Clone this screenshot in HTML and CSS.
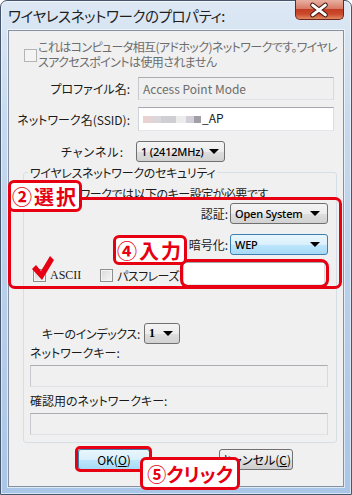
FILE: index.html
```html
<!DOCTYPE html>
<html lang="ja">
<head>
    <meta charset="UTF-8">
    <title>ワイヤレスネットワークのプロパティ</title>
    <link rel="stylesheet" href="styles.css">
</head>
<body>
    <div class="window">
        <div class="titlebar">
            <span class="title">ワイヤレスネットワークのプロパティ:</span>
            <span class="close-btn">
                <svg width="49" height="20" viewBox="0 0 49 20">
                    <path d="M18 5 L31 15 M31 5 L18 15" stroke="#3a1710" stroke-width="5" stroke-linecap="round"/>
                    <path d="M18 5 L31 15 M31 5 L18 15" stroke="#fff" stroke-width="3" stroke-linecap="round"/>
                </svg>
            </span>
        </div>

        <div class="client">
            <!-- ad hoc option (disabled) -->
            <div class="adhoc">
                <span class="check disabled"></span>
                <p class="adhoc-text">これはコンピュータ相互(アドホック)ネットワークです。ワイヤレ<br>スアクセスポイントは使用されません</p>
            </div>

            <div class="field-row">
                <span class="field-label">プロファイル名:</span>
                <div class="textbox disabled profile">Access Point Mode</div>
            </div>
            <div class="field-row ssid-row">
                <span class="field-label">ネットワーク名(SSID):</span>
                <div class="textbox ssid"><span class="mosaic"></span>_AP</div>
            </div>
            <div class="field-row channel-row">
                <span class="field-label channel-label">チャンネル:</span>
                <div class="combo channel">1 (2412MHz)<i class="arrow"></i></div>
            </div>

            <fieldset class="group">
                <legend>ワイヤレスネットワークのセキュリティ</legend>
                <p class="note">このネットワークでは以下のキー設定が必要です</p>

                <div class="combo-row">
                    <span>認証:</span>
                    <div class="combo wide">Open System<i class="arrow"></i></div>
                </div>
                <div class="combo-row enc-row">
                    <span>暗号化:</span>
                    <div class="combo wide focused">WEP<i class="arrow"></i></div>
                </div>

                <div class="opts-row">
                    <label class="opt ascii"><span class="check"></span>ASCII</label>
                    <label class="opt pass"><span class="check"></span>パスフレーズ</label>
                    <div class="textbox pass-input"></div>
                </div>

                <div class="index-row">
                    <span class="index-label">キーのインデックス:</span>
                    <div class="combo small">1<i class="arrow"></i></div>
                </div>
                <p class="key-label">ネットワークキー:</p>
                <div class="textbox disabled key-input"></div>
                <p class="key-label confirm">確認用のネットワークキー:</p>
                <div class="textbox disabled key-input"></div>
            </fieldset>

            <div class="buttons">
                <span class="btn default">OK(<u>O</u>)</span>
                <span class="btn cancel">キャンセル(<u>C</u>)</span>
            </div>
        </div>
    </div>

    <!-- red annotations drawn over the dialog -->
    <div class="mark-frame security"></div>
    <div class="mark-frame passphrase"></div>
    <div class="mark-frame ok"></div>
    <svg class="tick" width="24" height="28" viewBox="0 0 24 28">
        <path d="M2 15 L6 11 L11 17 L20 2 L24 6 L12 26 Z" fill="#e60012"/>
    </svg>
    <div class="callout step2">②選択</div>
    <div class="callout step4">④入力</div>
    <div class="callout step5">⑤クリック</div>
</body>
</html>
```

FILE: styles.css
```css
:root {
    --red: #e60012;
    --dialog: #f0f0f0;
    --text: #1b1b1b;
    --muted: #6d6d6d;
}

* {
    margin: 0;
    padding: 0;
    box-sizing: border-box;
}

body {
    position: relative;
    width: 352px;
    height: 495px;
    overflow: hidden;
    background: #ffffff;
    color: var(--text);
    font-family: "Noto Sans CJK JP", "Noto Sans", sans-serif;
    font-size: 12px;
    font-feature-settings: "palt";
    line-height: 15px;
}

/* ---- window frame ---- */
.window {
    width: 352px;
    height: 495px;
    display: flex;
    flex-direction: column;
    border: 1px solid #46576d;
    border-radius: 7px 7px 0 0;
    background: linear-gradient(#dde8f4, #c6d9ee 25%, #b8cfea 60%, #aac6e6);
    box-shadow: inset 0 0 0 1px rgba(255, 255, 255, 0.55);
    position: relative;
}

.titlebar {
    height: 29px;
    display: flex;
    align-items: center;
    padding-left: 7px;
}

.title {
    font-size: 14.5px;
    color: #1e1e1e;
    letter-spacing: -0.4px;
}

.close-btn {
    position: absolute;
    top: -1px;
    right: 7px;
    width: 49px;
    height: 20px;
    border: 1px solid #6a2619;
    border-top: none;
    border-radius: 0 0 5px 5px;
    background: linear-gradient(#eab0a2, #d77b66 45%, #c33d22 50%, #cc4a2c 75%, #e08a62);
    display: flex;
}

.close-btn svg {
    margin-left: -1px;
}

.client {
    flex: 1;
    margin: 0 7px 7px;
    background: var(--dialog);
    border: 1px solid #8591a2;
    box-shadow: 0 0 0 1px rgba(255, 255, 255, 0.6);
    padding-top: 8px;
}

/* ---- generic controls ---- */
.check {
    display: inline-block;
    width: 13px;
    height: 13px;
    border: 1px solid #8f8f8f;
    background: linear-gradient(135deg, #d9d9d9, #f7f7f7);
    box-shadow: inset 0 0 0 1px #f4f4f4;
    flex-shrink: 0;
}

.check.disabled {
    border-color: #b4b4b4;
    background: #f4f4f4;
}

.textbox {
    height: 23px;
    border: 1px solid;
    border-color: #a3a7ad #d9dde2 #e3e7ec #cfd4da;
    background: #ffffff;
    padding: 3px 4px;
    font-size: 12px;
}

.textbox.disabled {
    background: var(--dialog);
    color: var(--muted);
    border-color: #a9adb2 #d6d9dd #dfe2e6 #c6cacf;
}

.combo {
    position: relative;
    height: 21px;
    border: 1px solid #707070;
    border-radius: 3px;
    background: linear-gradient(#f4f4f4, #ececec 50%, #dedede 51%, #d2d2d2);
    padding: 2px 0 0 4px;
    font-family: "Noto Sans", sans-serif;
    font-size: 11px;
    font-weight: 500;
    line-height: 15px;
    letter-spacing: -0.2px;
    color: #000;
    white-space: nowrap;
}

.combo.focused {
    border-color: #3c7fb1;
    background: linear-gradient(#eaf6fd, #d9f0fc 50%, #bee6fd 51%, #a7d9f5);
}

.arrow {
    position: absolute;
    right: 7px;
    top: 7px;
    width: 0;
    height: 0;
    border-left: 5px solid transparent;
    border-right: 5px solid transparent;
    border-top: 5px solid #000;
}

/* ---- top section ---- */
.adhoc {
    display: flex;
    align-items: center;
    padding-left: 15px;
    height: 30px;
}

.adhoc .check {
    margin-top: 2px;
}

.adhoc-text {
    margin-left: 1px;
    color: var(--muted);
    white-space: nowrap;
    letter-spacing: -0.6px;
}

.field-row {
    display: flex;
    align-items: center;
    margin-top: 8px;
}

.field-label {
    width: 121px;
    text-align: right;
    white-space: nowrap;
}

.field-row .textbox {
    width: 196px;
    margin-left: 8px;
}

.ssid-row {
    margin-top: 7px;
}

.ssid-row .textbox {
    height: 24px;
    padding-top: 2px;
}

.mosaic {
    display: inline-block;
    width: 58px;
    height: 7px;
    margin-right: 1px;
    background: linear-gradient(90deg, #e8d2d2 0 8px, #dad6d9 8px 18px, #cfcfd3 18px 33px, #ececec 33px 43px, #d4cfd6 43px 51px, #a29ea8 51px 58px);
}

.channel-row {
    margin-top: 10px;
}

.channel-label {
    width: 115px;
    letter-spacing: 1px;
}

.combo.channel {
    width: 89px;
    margin-left: 12px;
}

.combo.channel .arrow {
    right: 5px;
}

/* ---- security group ---- */
.group {
    margin: 3px 7px 0 14px;
    padding: 0 8px 7px 6px;
    border: 1px solid #d5dfe5;
    border-radius: 3px;
}

.group legend {
    padding: 0 2px;
    margin-left: -2px;
    line-height: 15px;
    letter-spacing: -0.3px;
}

.note {
    margin-top: 6px;
    white-space: nowrap;
    letter-spacing: -0.5px;
}

.combo-row {
    display: flex;
    justify-content: flex-end;
    align-items: center;
    margin-top: 2px;
}

.combo-row span {
    margin-right: 2px;
}

.combo.wide {
    width: 98px;
}

.enc-row {
    margin-top: 10px;
}

.opts-row {
    display: flex;
    align-items: flex-end;
    margin-top: 7px;
    padding-left: 3px;
}

.opt {
    display: flex;
    align-items: center;
    gap: 4px;
    margin-bottom: 2px;
}

.opt.ascii {
    width: 67px;
    font-family: "Liberation Serif", serif;
    font-size: 12px;
}

.opt.pass {
    width: 83px;
    letter-spacing: -0.5px;
}

.pass-input {
    width: 142px;
    height: 23px;
}

.index-row {
    display: flex;
    align-items: center;
    margin-top: 38px;
}

.index-label {
    width: 110px;
    text-align: right;
    letter-spacing: -0.3px;
}

.combo.small {
    width: 36px;
    margin-left: 4px;
    font-family: "Liberation Serif", serif;
    font-size: 12px;
    font-weight: bold;
}

.combo.small .arrow {
    right: 6px;
}

.key-label {
    margin-top: 1px;
}

.key-label.confirm {
    margin-top: 6px;
}

.key-input {
    width: 298px;
    height: 22px;
    margin-top: 5px;
}

/* ---- buttons ---- */
.buttons {
    display: flex;
    gap: 69px;
    padding-left: 69px;
    margin-top: 6px;
}

.btn {
    height: 21px;
    border: 1px solid #707070;
    border-radius: 3px;
    background: linear-gradient(#f2f2f2, #ebebeb 50%, #dddddd 51%, #cfcfcf);
    text-align: center;
    line-height: 19px;
    font-size: 12px;
    color: #000;
}

.btn.default {
    width: 72px;
    border-color: #3c7fb1;
    background: linear-gradient(#eaf6fd, #d9f0fc 50%, #bee6fd 51%, #a7d9f5);
}

.btn.cancel {
    width: 74px;
}

/* ---- annotations ---- */
.mark-frame {
    position: absolute;
    border: 3px solid var(--red);
}

.mark-frame.security {
    left: 8px;
    top: 197px;
    width: 334px;
    height: 92px;
    border-radius: 7px;
}

.mark-frame.passphrase {
    left: 180px;
    top: 259px;
    width: 149px;
    height: 29px;
    border-radius: 8px;
}

.mark-frame.ok {
    left: 75px;
    top: 446px;
    width: 77px;
    height: 26px;
    border-radius: 5px;
}

.tick {
    position: absolute;
    left: 30px;
    top: 254px;
}

.callout {
    position: absolute;
    display: flex;
    align-items: center;
    justify-content: center;
    background: #ffffff;
    border: 3px solid var(--red);
    border-radius: 6px;
    color: var(--red);
    font-weight: bold;
    font-size: 20px;
    letter-spacing: 2px;
    font-feature-settings: normal;
}

.step2 {
    left: 8px;
    top: 180px;
    width: 74px;
    height: 32px;
}

.step4 {
    left: 113px;
    top: 235px;
    width: 74px;
    height: 30px;
}

.step5 {
    left: 140px;
    top: 457px;
    width: 100px;
    height: 33px;
    font-size: 19px;
    letter-spacing: 0;
    font-feature-settings: "palt";
}
```
